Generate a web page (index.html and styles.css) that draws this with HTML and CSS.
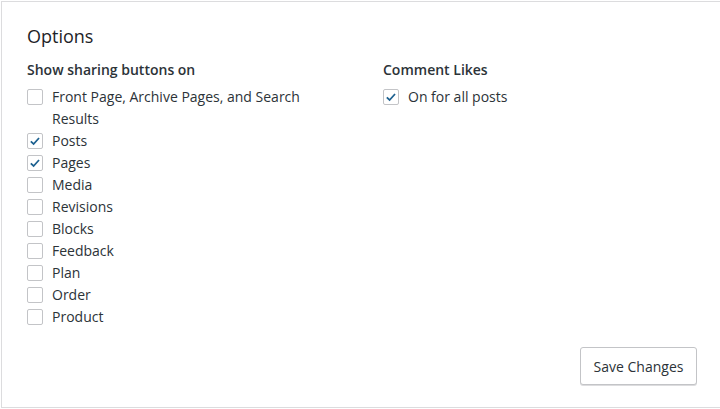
FILE: index.html
```html
<!DOCTYPE html>
<html>
<head>
<meta charset="utf-8">
<link rel="stylesheet" href="styles.css">
</head>
<body>
<div class="card">
  <h2 class="title">Options</h2>
  <div class="cols">
    <div class="col">
      <h3 class="label">Show sharing buttons on</h3>
      <ul class="list">
        <li class="row"><span class="box"></span><span class="txt">Front Page, Archive Pages, and Search Results</span></li>
        <li class="row"><span class="box on"><svg viewBox="0 0 16 16"><path d="M3.2 8.4 L6.4 11.4 L12.6 4.6"/></svg></span><span class="txt">Posts</span></li>
        <li class="row"><span class="box on"><svg viewBox="0 0 16 16"><path d="M3.2 8.4 L6.4 11.4 L12.6 4.6"/></svg></span><span class="txt">Pages</span></li>
        <li class="row"><span class="box"></span><span class="txt">Media</span></li>
        <li class="row"><span class="box"></span><span class="txt">Revisions</span></li>
        <li class="row"><span class="box"></span><span class="txt">Blocks</span></li>
        <li class="row"><span class="box"></span><span class="txt">Feedback</span></li>
        <li class="row"><span class="box"></span><span class="txt">Plan</span></li>
        <li class="row"><span class="box"></span><span class="txt">Order</span></li>
        <li class="row"><span class="box"></span><span class="txt">Product</span></li>
      </ul>
    </div>
    <div class="col">
      <h3 class="label">Comment Likes</h3>
      <ul class="list">
        <li class="row"><span class="box on"><svg viewBox="0 0 16 16"><path d="M3.2 8.4 L6.4 11.4 L12.6 4.6"/></svg></span><span class="txt">On for all posts</span></li>
      </ul>
    </div>
  </div>
  <div class="actions">
    <button class="btn">Save Changes</button>
  </div>
</div>
</body>
</html>
```

FILE: styles.css
```css
html, body {
  margin: 0;
  padding: 0;
  background: #ffffff;
  overflow: hidden;
}
body {
  font-family: "Open Sans", "Noto Sans", "Liberation Sans", sans-serif;
  color: #2c3338;
  font-size: 14px;
}
.card {
  box-sizing: border-box;
  width: 721px;
  height: 407px;
  margin: 1px 0 0 1px;
  border: 1px solid #dcdcde;
  padding: 22px 24px 0 25px;
  display: flex;
  flex-direction: column;
}
.title {
  margin: 0 0 11px;
  font-size: 18px;
  font-weight: 400;
  line-height: 24px;
  color: #1d2327;
}
.cols {
  display: grid;
  grid-template-columns: 1fr 1fr;
  column-gap: 42px;
}
.label {
  margin: 0 0 5px;
  font-size: 14px;
  font-weight: 600;
  line-height: 22px;
  color: #2c3338;
}
.list {
  list-style: none;
  margin: 0;
  padding: 0;
}
.row {
  display: flex;
  align-items: flex-start;
  line-height: 22px;
}
.box {
  flex: none;
  box-sizing: border-box;
  width: 16px;
  height: 16px;
  margin: 3px 9px 0 0;
  border: 1px solid #c3c4c7;
  border-radius: 2px;
  background: #fff;
  display: flex;
}
.box svg {
  width: 14px;
  height: 14px;
}
.box path {
  fill: none;
  stroke: #1d6190;
  stroke-width: 2;
}
.txt {
  color: #2c3338;
}
.actions {
  display: flex;
  justify-content: flex-end;
  margin-top: 19px;
}
.btn {
  box-sizing: border-box;
  width: 117px;
  height: 38px;
  border: 1px solid #c3c4c7;
  border-radius: 3px;
  background: #fff;
  box-shadow: 0 1px 0 #dcdcde;
  font-family: inherit;
  font-size: 14px;
  color: #2c3338;
  padding: 0;
}
```
